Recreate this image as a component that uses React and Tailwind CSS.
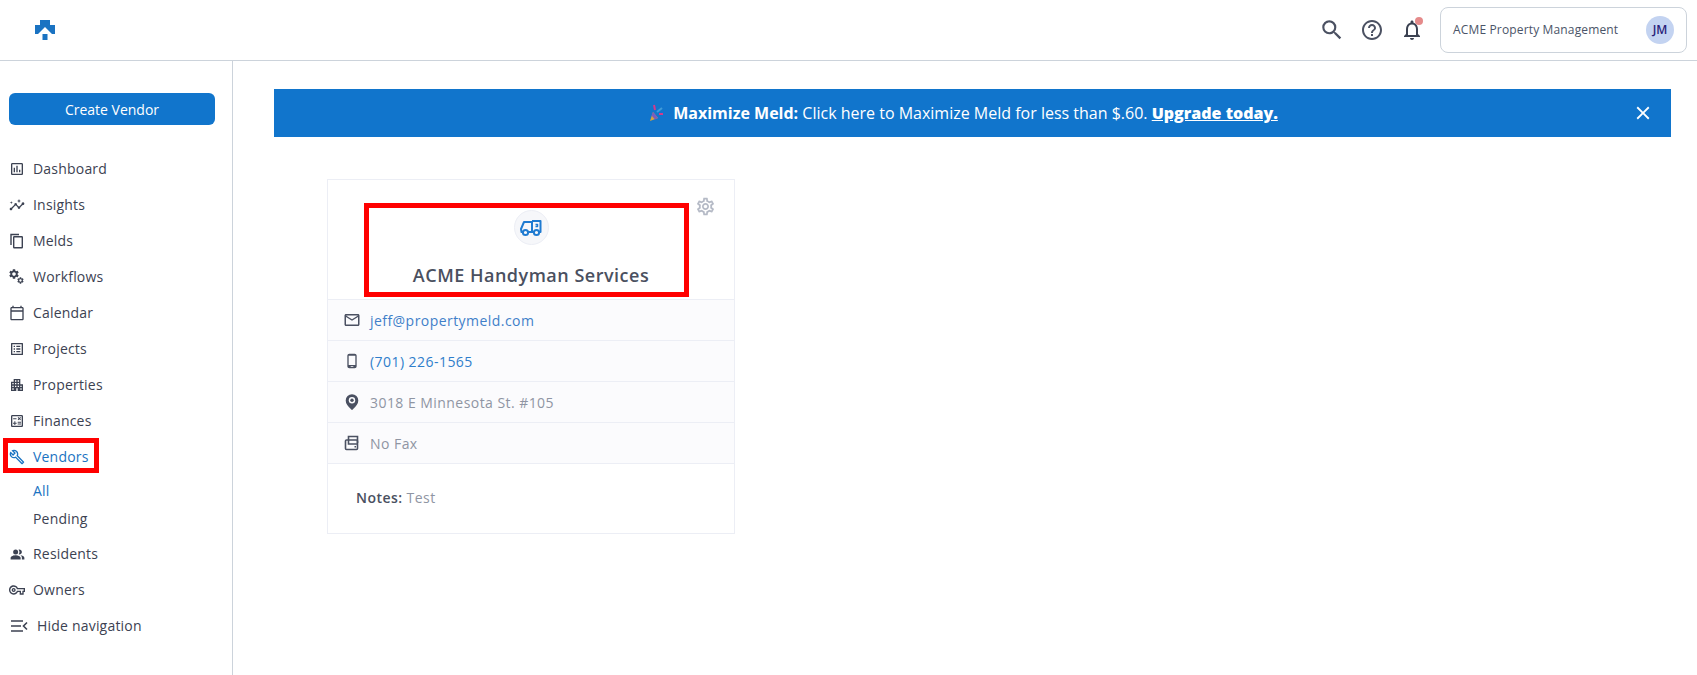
import React from 'react';
import {
  MdOutlineAssessment,
  MdInsights,
  MdOutlineCalendarToday,
  MdOutlineListAlt,
  MdApartment,
  MdOutlineCalculate,
  MdOutlineBuild,
  MdPeopleAlt,
  MdOutlineVpnKey,
  MdOutlineEmail,
  MdOutlinePhoneAndroid,
  MdOutlineSettings,
  MdSearch,
  MdHelpOutline,
  MdOutlineNotifications,
  MdClose,
} from 'react-icons/md';

const gear =
  'M19.14 12.94c.04-.3.06-.61.06-.94 0-.32-.02-.64-.07-.94l2.03-1.58c.18-.14.23-.41.12-.61l-1.92-3.32c-.12-.22-.37-.29-.59-.22l-2.39.96c-.5-.38-1.03-.7-1.62-.94l-.36-2.54c-.04-.24-.24-.41-.48-.41h-3.84c-.24 0-.43.17-.47.41l-.36 2.54c-.59.24-1.13.57-1.62.94l-2.39-.96c-.22-.08-.47 0-.59.22L2.74 8.87c-.12.21-.08.47.12.61l2.03 1.58c-.05.3-.09.63-.09.94s.02.64.07.94l-2.03 1.58c-.18.14-.23.41-.12.61l1.92 3.32c.12.22.37.29.59.22l2.39-.96c.5.38 1.03.7 1.62.94l.36 2.54c.05.24.24.41.48.41h3.84c.24 0 .44-.17.47-.41l.36-2.54c.59-.24 1.13-.56 1.62-.94l2.39.96c.22.08.47 0 .59-.22l1.92-3.32c.12-.22.07-.47-.12-.61l-2.01-1.58zM12 15.6c-1.98 0-3.6-1.62-3.6-3.6s1.62-3.6 3.6-3.6 3.6 1.62 3.6 3.6-1.62 3.6-3.6 3.6z';

const Logo = () => (
  <svg width="20" height="20" viewBox="0 0 20 20" fill="#1a73c2">
    <path d="M5 0h10v5h5v9h-3l-7-7-7 7H0V5h5z" />
    <rect x="7.500" y="14" width="5" height="6" />
  </svg>
);

const Truck = () => (
  <svg width="24" height="20" viewBox="0 0 24 20" fill="none" stroke="#1f7bd1" strokeWidth="2" strokeLinejoin="round">
    <path d="M4 14H2.500l-.5-3 3-7h8v10H9" />
    <path d="M13 3h8.500v11H20" />
    <path d="M13 14h2" />
    <path d="M16.500 6.500h2v2h-2" strokeWidth="1.500" />
    <circle cx="6.500" cy="14.500" r="2.600" />
    <circle cx="17.500" cy="14.500" r="2.600" />
  </svg>
);

const Fax = () => (
  <svg width="16" height="16" viewBox="0 0 16 16" fill="none" stroke="#4b5162" strokeWidth="1.600">
    <path d="M4.500 5V1.500h9V8" />
    <rect x="1.500" y="5" width="12" height="9.500" rx="1" />
    <path d="M4.500 5v4h9" />
    <rect x="10.500" y="11" width="1.500" height="1.500" fill="#4b5162" stroke="none" />
  </svg>
);

const Pin = () => (
  <svg width="14" height="16" viewBox="0 0 14 16" fill="none">
    <path d="M7 1.200a5.300 5.300 0 0 0-5.300 5.300C1.700 10 7 14.800 7 14.800s5.300-4.800 5.300-8.300A5.300 5.300 0 0 0 7 1.200z" stroke="#4b5162" strokeWidth="2" fill="#4b5162" />
    <circle cx="7" cy="6.300" r="3.200" fill="#fbfbfd" />
    <circle cx="7" cy="6.300" r="1.700" fill="#4b5162" />
  </svg>
);

const Popper = () => (
  <svg width="16" height="18" viewBox="0 0 16 18">
    <path d="M2 17l3-9 5 6z" fill="#d9a23b" />
    <path d="M5 8l5 6-3 1.500-3.500-4z" fill="#7a5cc0" />
    <path d="M6 1l1 5" stroke="#d43a8c" strokeWidth="2" />
    <path d="M9 8l5-4" stroke="#3f9bd9" strokeWidth="2" />
    <path d="M11 10l4 0" stroke="#d43a8c" strokeWidth="2" />
  </svg>
);

const Copy = ({ size }) => (
  <svg width={size} height={size} viewBox="0 0 16 16" fill="none" stroke="currentColor" strokeWidth="1.400">
    <path d="M2 12V1.500h8" />
    <rect x="4.700" y="3.700" width="8.600" height="11" rx="0.500" />
  </svg>
);

const Gears = ({ size }) => (
  <svg width={size} height={size} viewBox="0 0 16 16" fill="currentColor">
    <path d={gear} transform="translate(-1 -1) scale(0.5)" />
    <path d={gear} transform="translate(7.500 7.500) scale(0.33)" />
  </svg>
);

const HideNav = () => (
  <svg width="17" height="14" viewBox="0 0 17 14" fill="none" stroke="currentColor" strokeWidth="1.600">
    <path d="M0 2h12M0 7h10M0 12h12" />
    <path d="M16 3.500L12.500 7l3.500 3.500" />
  </svg>
);

const navTop = [
  { label: 'Dashboard', Icon: MdOutlineAssessment },
  { label: 'Insights', Icon: MdInsights },
  { label: 'Melds', Icon: Copy },
  { label: 'Workflows', Icon: Gears },
  { label: 'Calendar', Icon: MdOutlineCalendarToday },
  { label: 'Projects', Icon: MdOutlineListAlt },
  { label: 'Properties', Icon: MdApartment },
  { label: 'Finances', Icon: MdOutlineCalculate },
];

const NavItem = ({ label, Icon, active, size = 16 }) => (
  <div className={`flex h-9 items-center gap-[8px] pl-[9px] ${active ? 'text-[#1a73c2]' : 'text-[#3c4252]'}`}>
    <span className="flex w-[16px] justify-center">
      <Icon size={size} />
    </span>
    <span className="text-[14px] font-medium leading-none tracking-[0.2px]">{label}</span>
  </div>
);

const Row = ({ icon, children }) => (
  <div className="flex h-[41px] items-center border-b border-[#eceef5] bg-[#fbfbfd] pl-[15px] text-[14px] tracking-[0.45px]">
    <span className="mr-[9px] flex w-[18px] justify-center text-[#4b5162]">{icon}</span>
    {children}
  </div>
);

export default function App() {
  return (
    <div className="relative flex h-[675px] flex-col overflow-hidden bg-white font-['Open_Sans',sans-serif]">
      {/* top bar */}
      <header className="flex h-[61px] shrink-0 items-center justify-between border-b border-[#ccd3db] pl-[35px] pr-[10px]">
        <Logo />
        <div className="flex items-center">
          <MdSearch size={26} className="mr-[15px] text-[#4b5162]" />
          <MdHelpOutline size={24} className="mr-[16px] text-[#4b5162]" />
          <span className="relative mr-[16px] flex">
            <MdOutlineNotifications size={24} className="text-[#3c4252]" />
            <span className="absolute right-[1px] top-[-1px] h-[8px] w-[8px] rounded-full bg-[#e58a8a]" />
          </span>
          <div className="flex h-[46px] w-[247px] items-center justify-between rounded-[8px] border border-[#ccd3db] pl-[12px] pr-[12px]">
            <span className="text-[12px] font-medium tracking-[0.15px] text-[#4a5468]">ACME Property Management</span>
            <span className="flex h-[28px] w-[28px] items-center justify-center rounded-full bg-[#c3d3f1] text-[12px] font-semibold text-[#2a1f7a]">JM</span>
          </div>
        </div>
      </header>

      <div className="flex min-h-0 flex-1">
        {/* sidebar */}
        <aside className="w-[233px] shrink-0 border-r border-[#ccd3db] pt-[32px]">
          <button className="ml-[9px] flex h-[32px] w-[206px] items-center justify-center rounded-[6px] bg-[#1175cc] text-[14px] font-medium text-white">
            Create Vendor
          </button>
          <nav className="mt-[26px]">
            {navTop.map((item) => (
              <NavItem key={item.label} {...item} />
            ))}
            <NavItem label="Vendors" Icon={MdOutlineBuild} active />
            <div className="pb-[3px] pl-[33px] pt-[2px] text-[14px] font-medium leading-none tracking-[0.2px]">
              <div className="flex h-[28px] items-center text-[#1a73c2]">All</div>
              <div className="flex h-[28px] items-center text-[#3c4252]">Pending</div>
            </div>
            <NavItem label="Residents" Icon={MdPeopleAlt} size={15} />
            <NavItem label="Owners" Icon={MdOutlineVpnKey} />
            <div className="flex h-9 items-center gap-[9px] pl-[11px] text-[#3c4252]">
              <HideNav />
              <span className="text-[14px] font-medium leading-none tracking-[0.2px]">Hide navigation</span>
            </div>
          </nav>
        </aside>

        {/* content */}
        <main className="flex-1 pl-[41px] pr-[26px] pt-[28px]">
          <div className="relative flex h-[48px] items-center justify-center bg-[#1175cc] pr-[19px] text-[16px] text-white">
            <span className="mr-[9px] flex"><Popper /></span>
            <span className="font-bold">Maximize Meld:&nbsp;</span>
            <span>Click here to Maximize Meld for less than $.60.&nbsp;</span>
            <span className="font-extrabold underline">Upgrade today.</span>
            <MdClose size={22} className="absolute right-[17px] top-[13px]" />
          </div>

          <div className="ml-[53px] mt-[42px] w-[408px] border border-[#eceef5]">
            <div className="relative flex h-[120px] flex-col items-center border-b border-[#eceef5] pt-[30px]">
              <MdOutlineSettings size={21} className="absolute right-[18px] top-[16px] text-[#b5bac6]" />
              <span className="flex h-[35px] w-[35px] items-center justify-center rounded-full border border-[#eceef5] bg-[#f6f7fa]">
                <Truck />
              </span>
              <h2 className="mt-[18px] text-[18px] font-semibold leading-[24px] tracking-[0.5px] text-[#4a5060]">ACME Handyman Services</h2>
            </div>
            <Row icon={<MdOutlineEmail size={18} />}>
              <span className="text-[#3f7fc9]">jeff@propertymeld.com</span>
            </Row>
            <Row icon={<MdOutlinePhoneAndroid size={16} />}>
              <span className="text-[#2f7ecb]">(701) 226-1565</span>
            </Row>
            <Row icon={<Pin />}>
              <span className="text-[#8f95a3]">3018 E Minnesota St. #105</span>
            </Row>
            <Row icon={<Fax />}>
              <span className="text-[#8f95a3]">No Fax</span>
            </Row>
            <div className="flex h-[69px] items-center pb-[2px] pl-[28px] text-[14px] tracking-[0.45px]">
              <span className="font-semibold text-[#4a5060]">Notes:&nbsp;</span>
              <span className="text-[#8f95a3]">Test</span>
            </div>
          </div>
        </main>
      </div>

      {/* annotation boxes */}
      <div className="absolute left-[3px] top-[438px] h-[35px] w-[96px] border-[5px] border-[#ff0000]" />
      <div className="absolute left-[364px] top-[203px] h-[94px] w-[325px] border-[5px] border-[#ff0000]" />
    </div>
  );
}
